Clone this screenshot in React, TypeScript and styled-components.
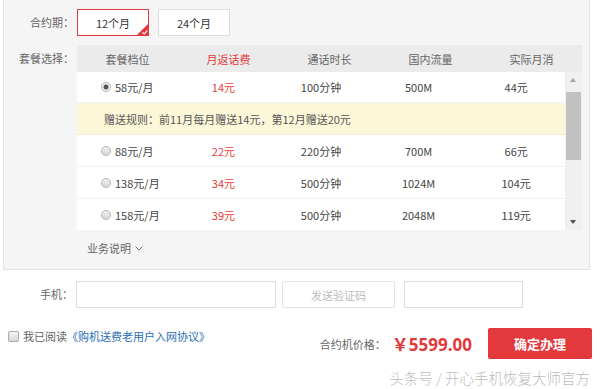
import styled, { createGlobalStyle } from "styled-components";

const GlobalStyle = createGlobalStyle`
  html, body {
    margin: 0;
    padding: 0;
    background: #fff;
  }
  body {
    font-family: "Noto Sans CJK SC", "Noto Sans", sans-serif;
    font-size: 11px;
    color: #333;
  }
`;

const Page = styled.div`
  width: 600px;
  height: 389px;
  position: relative;
  overflow: hidden;
  background: #fff;
`;

const Panel = styled.div`
  margin-left: 3px;
  width: 587px;
  height: 270px;
  box-sizing: border-box;
  background: #f5f5f5;
  border: 1px solid #e4e4e4;
  border-top: none;
  padding-top: 9px;
`;

const FormRow = styled.div<{ $top?: number }>`
  display: flex;
  align-items: flex-start;
  margin-top: ${(p) => p.$top ?? 0}px;
`;

const Label = styled.div<{ $w?: number }>`
  width: ${(p) => p.$w ?? 70}px;
  flex: none;
  text-align: right;
  color: #666;
  line-height: 27px;
  margin-right: 3px;
  white-space: nowrap;
`;

const Period = styled.div<{ $active?: boolean }>`
  position: relative;
  width: 72px;
  height: 27px;
  box-sizing: border-box;
  margin-right: 9px;
  background: #fff;
  border: 1px solid ${(p) => (p.$active ? "#e4393c" : "#ddd")};
  display: flex;
  align-items: center;
  justify-content: center;
  color: #333;
`;

const Corner = styled.svg`
  position: absolute;
  right: -1px;
  bottom: -1px;
`;

const Table = styled.div`
  width: 505px;
`;

const HeadRow = styled.div`
  display: grid;
  grid-template-columns: repeat(5, 1fr);
  height: 27px;
  background: #ebebeb;
  align-items: center;
  text-align: center;
  color: #666;
`;

const HeadCell = styled.div<{ $red?: boolean }>`
  color: ${(p) => (p.$red ? "#e4393c" : "#666")};
`;

const Body = styled.div`
  display: flex;
  height: 158px;
  overflow: hidden;
`;

const Rows = styled.div`
  width: 488px;
  background: #fff;
`;

const Row = styled.div<{ $h: number }>`
  display: grid;
  grid-template-columns: repeat(5, 1fr);
  height: ${(p) => p.$h}px;
  align-items: center;
  text-align: center;
  color: #444;
  border-bottom: 1px solid #f0f0f0;
  box-sizing: border-box;
`;

const Cell = styled.div<{ $red?: boolean }>`
  color: ${(p) => (p.$red ? "#e4393c" : "#444")};
  display: flex;
  align-items: center;
  justify-content: center;
`;

const PlanCell = styled.div`
  display: flex;
  align-items: center;
  padding-left: 24px;
  color: #444;
`;

const Radio = styled.span<{ $checked?: boolean }>`
  width: 10px;
  height: 10px;
  border-radius: 50%;
  box-sizing: border-box;
  border: 1px solid #b5b5b5;
  background: ${(p) =>
    p.$checked
      ? "radial-gradient(circle, #555 0 2.2px, #eee 2.8px)"
      : "linear-gradient(#f2f2f2, #d6d6d6)"};
  margin-right: 4px;
`;

const Rule = styled.div`
  height: 32px;
  background: #fdf7d9;
  display: flex;
  align-items: center;
  padding-left: 27px;
  color: #555;
  border-bottom: 1px solid #f3ecd0;
  box-sizing: border-box;
`;

const ScrollBar = styled.div`
  width: 17px;
  background: #f0f0f0;
  position: relative;
`;

const Thumb = styled.div`
  position: absolute;
  left: 1px;
  right: 1px;
  top: 20px;
  height: 68px;
  background: #c1c1c1;
`;

const Arrow = styled.div<{ $down?: boolean }>`
  position: absolute;
  left: 5px;
  width: 0;
  height: 0;
  border-left: 3.5px solid transparent;
  border-right: 3.5px solid transparent;
  ${(p) =>
    p.$down
      ? "top: 148px; border-top: 4px solid #505050;"
      : "top: 6px; border-bottom: 4px solid #a3a3a3;"}
`;

const More = styled.div`
  margin: 10px 0 0 83px;
  color: #666;
  display: flex;
  align-items: center;
  gap: 4px;
`;

const Input = styled.div<{ $w: number }>`
  width: ${(p) => p.$w}px;
  height: 27px;
  box-sizing: border-box;
  border: 1px solid #ddd;
  background: #fff;
  margin-right: 6px;
`;

const CodeButton = styled.div`
  width: 113px;
  height: 27px;
  box-sizing: border-box;
  border: 1px solid #e2e2e2;
  border-radius: 2px;
  background: #fff;
  color: #bbb;
  display: flex;
  align-items: center;
  justify-content: center;
  margin-right: 9px;
`;

const Footer = styled.div`
  display: flex;
  align-items: flex-start;
  margin-top: 19px;
  padding-left: 8px;
`;

const Agree = styled.div`
  display: flex;
  align-items: center;
  color: #666;
  height: 16px;
  margin-top: 1px;
  flex: 1;
`;

const Check = styled.span`
  width: 11px;
  height: 11px;
  box-sizing: border-box;
  border: 1px solid #aaa;
  border-radius: 2px;
  background: linear-gradient(#f4f4f4, #d8d8d8);
  margin-right: 4px;
`;

const Link = styled.span`
  color: #2a6fb8;
`;

const PriceBox = styled.div`
  display: flex;
  align-items: center;
  height: 31px;
  margin-top: 1px;
`;

const PriceLabel = styled.span`
  color: #666;
  margin-right: 6px;
`;

const Price = styled.span`
  color: #e4393c;
  font-size: 17px;
  font-weight: bold;
  font-family: "Open Sans", "Noto Sans CJK SC", sans-serif;
  margin-right: 16px;
`;

const Submit = styled.div`
  width: 104px;
  height: 31px;
  background: #e4393c;
  border-radius: 2px;
  color: #fff;
  font-weight: bold;
  font-size: 13px;
  display: flex;
  align-items: center;
  justify-content: center;
  margin-right: 8px;
`;

const Watermark = styled.div`
  position: absolute;
  right: 10px;
  bottom: 1px;
  font-size: 14.5px;
  font-weight: 300;
  color: #bdbdbd;
  text-shadow: 0 0 1px #fff;
`;

const plans = [
  { name: "88元/月", back: "22元", call: "220分钟", data: "700M", real: "66元" },
  { name: "138元/月", back: "34元", call: "500分钟", data: "1024M", real: "104元" },
  { name: "158元/月", back: "39元", call: "500分钟", data: "2048M", real: "119元" },
];

export default function App() {
  return (
    <Page>
      <GlobalStyle />
      <Panel>
        <FormRow>
          <Label>合约期：</Label>
          <Period $active>
            12个月
            <Corner width="13" height="13" viewBox="0 0 13 13">
              <path d="M13 0 L13 13 L0 13 Z" fill="#e4393c" />
              <path d="M6.5 9.5 L8.3 11 L11.3 7.6" stroke="#fff" strokeWidth="1.2" fill="none" />
            </Corner>
          </Period>
          <Period>24个月</Period>
        </FormRow>
        <FormRow $top={9}>
          <Label>套餐选择：</Label>
          <Table>
            <HeadRow>
              <HeadCell>套餐档位</HeadCell>
              <HeadCell $red>月返话费</HeadCell>
              <HeadCell>通话时长</HeadCell>
              <HeadCell>国内流量</HeadCell>
              <HeadCell>实际月消</HeadCell>
            </HeadRow>
            <Body>
              <Rows>
                <Row $h={31}>
                  <PlanCell><Radio $checked />58元/月</PlanCell>
                  <Cell $red>14元</Cell>
                  <Cell>100分钟</Cell>
                  <Cell>500M</Cell>
                  <Cell>44元</Cell>
                </Row>
                <Rule>赠送规则：前11月每月赠送14元，第12月赠送20元</Rule>
                {plans.map((p) => (
                  <Row $h={32} key={p.name}>
                    <PlanCell><Radio />{p.name}</PlanCell>
                    <Cell $red>{p.back}</Cell>
                    <Cell>{p.call}</Cell>
                    <Cell>{p.data}</Cell>
                    <Cell>{p.real}</Cell>
                  </Row>
                ))}
              </Rows>
              <ScrollBar>
                <Arrow />
                <Thumb />
                <Arrow $down />
              </ScrollBar>
            </Body>
          </Table>
        </FormRow>
        <More>
          业务说明
          <svg width="8" height="5" viewBox="0 0 8 5">
            <path d="M0.5 0.5 L4 4 L7.5 0.5" stroke="#777" fill="none" />
          </svg>
        </More>
      </Panel>
      <FormRow $top={11}>
        <Label $w={73}>手机：</Label>
        <Input $w={200} />
        <CodeButton>发送验证码</CodeButton>
        <Input $w={119} />
      </FormRow>
      <Footer>
        <Agree>
          <Check />
          我已阅读<Link>《购机送费老用户入网协议》</Link>
        </Agree>
        <PriceBox>
          <PriceLabel>合约机价格：</PriceLabel>
          <Price>￥5599.00</Price>
          <Submit>确定办理</Submit>
        </PriceBox>
      </Footer>
      <Watermark>头条号 / 开心手机恢复大师官方</Watermark>
    </Page>
  );
}
